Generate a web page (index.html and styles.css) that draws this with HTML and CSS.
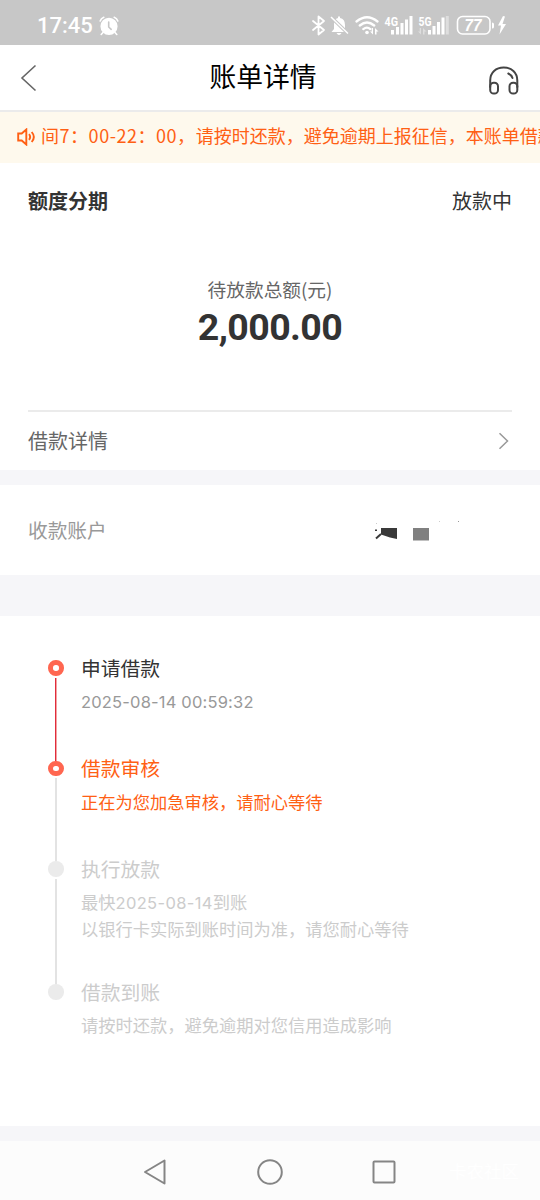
FILE: index.html
```html
<!DOCTYPE html>
<html lang="zh-CN">
<head>
<meta charset="utf-8">
<title>账单详情</title>
<link rel="stylesheet" href="styles.css">
</head>
<body>
<div class="screen">
  <div class="status">
    <span class="time">17:45</span>
    <svg class="alarm" width="20" height="20" viewBox="0 0 20 20" fill="none" stroke="#fff" stroke-width="1.6" stroke-linecap="round"><circle cx="10" cy="10.3" r="7.8" fill="#fff"/><path d="M1.2 5Q2 2.3 4.8 1.3M18.8 5Q18 2.3 15.2 1.3M4 16.5l-1.8 2M16 16.5l1.8 2"/><path d="M9.7 6v5l2.5 2.3" stroke="#c7c7c7"/></svg>
    <svg class="signals" width="198" height="24" viewBox="310 14 198 24">
      <g fill="none" stroke="#fff" stroke-width="1.8" stroke-linejoin="round" stroke-linecap="round">
        <path d="M313 21l11 9-5.5 4.5v-18l5.5 4.5-11 9"/>
        <path d="M356.500 21.500q10.500-8.500 21 0M359.800 25.500q7.200-6 14.400 0M363.300 29.100q3.700-3 7 0" stroke-width="2.300"/>
        <rect x="457.500" y="16.500" width="32.500" height="17.500" rx="5" stroke-width="1.600"/>
      </g>
      <path fill="#fff" d="M338 16.500h2v1.500q5 1 5 7v4.500l2 2.500H331.500l2.500-3v-5q0-5 4-6zM336.500 33h5q-2.500 4-5 0z"/>
      <path d="M331.500 17.500l16 15.500" stroke="#c7c7c7" stroke-width="3.500"/>
      <path d="M331 17l17 16.500" stroke="#fff" stroke-width="1.500"/>
      <circle cx="367" cy="32.500" r="1.800" fill="#fff"/>
      <path fill="#fff" d="M373 28v6.500l-3-3h1.700V28zM375 34.500V28l3.500 3.500h-2v3zM391 30h3v4.500h-3zM396 27h3v7.500h-3zM400.500 23h3v11.500h-3zM405 19.500h3v15h-3zM409.500 16h3v18.500h-3zM428 30h3v4.500h-3zM432.500 26h3v8.500h-3zM437 22h3v12.500h-3zM441.500 17.500h3v17h-3zM492 22.500q2 0 2 1.500v3q0 1.500-2 1.500zM503 16l-5 9.500h3l-1.500 9 6.500-10.500h-3.500l2.500-7.500z"/>
      <path fill="#dedede" d="M445.800 16h3v18.500h-3zM421 28v6.500l-3-3h1.700V28zM423 34.500V28l3.500 3.500h-2v3z"/>
      <text class="net" x="384.500" y="25.500" textLength="13.500" lengthAdjust="spacingAndGlyphs">4G</text>
      <text class="net" x="418.500" y="25.500" textLength="13" lengthAdjust="spacingAndGlyphs">5G</text>
      <text class="charge" x="464.500" y="31" textLength="17" lengthAdjust="spacingAndGlyphs">77</text>
    </svg>
  </div>
  <header class="nav">
    <svg width="18" height="28" viewBox="0 0 18 28" fill="none" stroke="#666" stroke-width="1.600"><path d="M15.500 1.500L2 14l13.500 12.500"/></svg>
    <h1>账单详情</h1>
    <svg class="service" width="32" height="30" viewBox="0 0 32 30" fill="none" stroke="#444" stroke-width="2" stroke-linecap="round"><path d="M2.200 21v-6.500C2.200 6.500 8 1.500 15.700 1.500S29.300 6.500 29.300 14.500V21M20.300 7.500q3 1.400 4.200 4.500"/><rect x="2.200" y="16.700" width="7.800" height="10.800" rx="3.600"/><rect x="21.500" y="16.700" width="7.800" height="10.800" rx="3.600"/></svg>
  </header>
  <div class="notice">
    <svg width="19" height="18" viewBox="0 0 19 18" fill="none" stroke="#ff6014" stroke-width="1.900"><path d="M1.200 5.500h3.500l4.600-4v15l-4.600-4H1.200zM12 6.200q2.300 2.800 0 5.600M14.700 4q4.300 5 0 10"/></svg>
    <p><span>间7：00-22：00，</span>请按时还款，避免逾期上报征信，本账单借款</p>
  </div>
  <section class="bill">
    <div class="row head"><b>额度分期</b><span>放款中</span></div>
    <div class="total"><span>待放款总额(元)</span><strong>2,000.00</strong></div>
    <div class="row detail"><span>借款详情</span><svg width="12" height="18" viewBox="0 0 12 18" fill="none" stroke="#999" stroke-width="1.500"><path d="M1.500 1.200L9.500 9l-8 7.800"/></svg></div>
  </section>
  <section class="account">
    <span>收款账户</span>
    <svg width="90" height="26" viewBox="373 518 90 26"><path fill="#393939" d="M381 528h16v11l-7-1.500-9-3zM375 529.500h2v1.500h-2z"/><path d="M376 538.500l5-4.500" stroke="#393939" stroke-width="2"/><path fill="#808080" d="M413 528h16v12.500h-16z"/><path fill="#999" d="M458 521h1v1h-1z"/><path fill="#ccc" d="M439 521h1v1h-1zM376 523h1v1h-1z"/></svg>
  </section>
  <section class="steps">
    <div class="step done"><div class="mark"><i class="dot"></i><i class="line"></i></div><div><h2>申请借款</h2><p><span class="date">2025-08-14 00:59:32</span></p></div></div>
    <div class="step current"><div class="mark"><i class="dot"></i><i class="line"></i></div><div><h2>借款审核</h2><p>正在为您加急审核，请耐心等待</p></div></div>
    <div class="step long"><div class="mark"><i class="dot"></i><i class="line"></i></div><div><h2>执行放款</h2><p>最快<span class="date">2025-08-14</span>到账</p><p>以银行卡实际到账时间为准，请您耐心等待</p></div></div>
    <div class="step"><div class="mark"><i class="dot"></i></div><div><h2>借款到账</h2><p>请按时还款，避免逾期对您信用造成影响</p></div></div>
  </section>
  <footer class="keys">
    <svg width="24" height="26" viewBox="0 0 24 26"><path d="M21.500 1.500v23L2 13z"/></svg>
    <svg width="26" height="26" viewBox="0 0 26 26"><circle cx="13" cy="13" r="11.800"/></svg>
    <svg width="24" height="24" viewBox="0 0 24 24"><rect x="1.500" y="1.500" width="21" height="21" rx="1"/></svg>
    <span class="community">卡农社区</span>
  </footer>
</div>
</body>
</html>
```
FILE: styles.css
```css
* { box-sizing: border-box; }
body, h1, h2, p { margin: 0; font-weight: 400; }
body { font-family: "Noto Sans CJK SC", sans-serif; color: #333; background: #fff; }
svg { display: block; flex: none; }
.screen { width: 540px; height: 1200px; overflow: hidden; background: #fff; display: flex; flex-direction: column; }
.screen > * { flex: none; }

.status { height: 45px; background: #c7c7c7; display: flex; align-items: center; padding: 6px 32px 0 37px; color: #fff; }
.time { font: 500 22px/24px Roboto, sans-serif; width: 62px; white-space: nowrap; }
.signals { margin-left: auto; }
.net { font: 700 12px Roboto, sans-serif; fill: #fff; }
.charge { font: italic 700 16px "Liberation Sans", sans-serif; fill: #fff; }

.nav { height: 67px; border-bottom: 2px solid #ebebeb; display: flex; align-items: center; justify-content: space-between; padding: 1px 20px 0; }
.nav h1 { font-size: 26.800px; line-height: 40px; color: #000; padding-bottom: 4px; }
.nav .service { margin-top: 6px; }

.notice { height: 51px; background: #fef9ed; color: #ff6014; display: flex; align-items: center; gap: 5px; padding: 0 0 2px 17px; }
.notice p { font-size: 18px; line-height: 28px; white-space: nowrap; padding-bottom: 3px; }
.notice span { letter-spacing: .54px; }

.bill { height: 307px; padding: 0 28px; display: flex; flex-direction: column; }
.row { display: flex; align-items: center; justify-content: space-between; font-size: 20px; line-height: 30px; }
.head { height: 75px; }
.total { height: 172px; padding-top: 38px; display: flex; flex-direction: column; align-items: center; color: #666; }
.total span { font-size: 18.700px; line-height: 26px; }
.total strong { font: 700 37.500px/44px Roboto, sans-serif; color: #333; margin-top: 3px; letter-spacing: -.6px; }
.detail { height: 60px; border-top: 2px solid #ebebeb; color: #666; }
.detail span { padding-bottom: 1px; }
.detail svg { margin-right: 2px; }

.account { height: 146px; border: solid #f6f6f9; border-width: 15px 0 41px; padding: 0 28px; display: flex; align-items: center; font-size: 19.700px; color: #999; }
.account span { width: 78px; padding-bottom: 2px; white-space: nowrap; }
.account svg { margin: 2px 0 0 267px; }

.steps { height: 525px; border-bottom: 15px solid #f6f6f9; padding: 38px 0 0 48px; color: #ccc; }
.step { display: flex; gap: 17px; height: 100.500px; }
.step.long { height: 123px; }
.mark { width: 16px; display: flex; flex-direction: column; align-items: center; padding-top: 6px; margin-bottom: -6px; }
.dot { flex: none; width: 15.500px; height: 15.500px; border-radius: 50%; background: #ebebeb; }
.line { width: 2px; flex: 1; margin-top: 2px; background: #e3e3e3; }
.done .dot, .current .dot { background: #fff; border: 5px solid #ff6650; }
.done .line { background: linear-gradient(90deg, #e02c3c 50%, #f4a3a3 50%); }
.step h2 { font-size: 19.800px; line-height: 26px; padding-top: .5px; }
.step p { font-size: 17.250px; line-height: 26px; white-space: nowrap; }
.step h2 + p { margin-top: 7.500px; }
.done h2 { color: #333; }
.done p { color: #999; }
.current { color: #ff6014; }
.date { font-family: Inter, sans-serif; font-size: 16.500px; letter-spacing: .18px; }
.long .date { letter-spacing: .35px; }

.keys { height: 60px; background: #fcfcfc; display: flex; align-items: center; padding: 1px 0 0 143px; }
.keys svg { fill: none; stroke: #858585; stroke-width: 2; stroke-linejoin: round; }
.keys svg + svg { margin-left: 90px; }
.keys svg:nth-child(3) { margin-left: 89px; }
.community { margin: -3px 0 0 53px; font-size: 17.500px; color: #fff; }
```
